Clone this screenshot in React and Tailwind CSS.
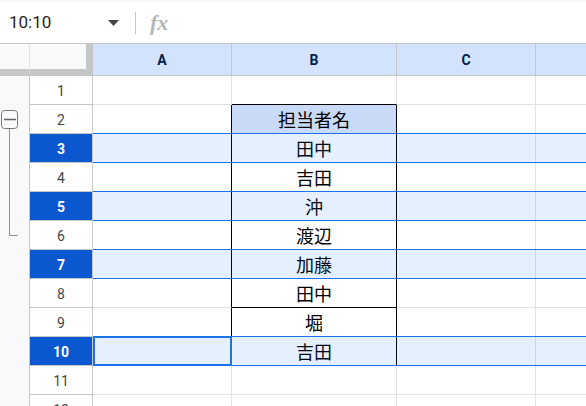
import React from 'react';

const rows = [
  { n: 1 },
  { n: 2, b: '担当者名', head: true },
  { n: 3, b: '田中', sel: true },
  { n: 4, b: '吉田' },
  { n: 5, b: '沖', sel: true },
  { n: 6, b: '渡辺' },
  { n: 7, b: '加藤', sel: true },
  { n: 8, b: '田中' },
  { n: 9, b: '堀' },
  { n: 10, b: '吉田', sel: true, active: true },
  { n: 11 },
  { n: 12 },
];

const FormulaBar = () => (
  <div className="flex h-[41px] items-center border-b border-[#c4c7c5] bg-white">
    <div className="flex w-[126px] items-center justify-between pl-[9px] pr-[7px]">
      <span className="text-[17px] text-[#1f1f1f]">10:10</span>
      <svg width="11" height="6" viewBox="0 0 11 6">
        <path d="M0 0h11L5.5 6z" fill="#444746" />
      </svg>
    </div>
    <div className="ml-[9px] h-[22px] w-px bg-[#c4c7c5]" />
    <span className="ml-[14px] font-['Liberation_Serif',serif] text-[22px] font-bold italic leading-none text-[#b4b7b9]">fx</span>
  </div>
);

const ColHeader = ({ label, w }) => (
  <div className={`flex h-[32px] shrink-0 items-center justify-center border-r border-b border-[#c4c7c5] bg-[#d3e3fd] pt-[1px] text-[14px] font-bold text-[#041e49] ${w}`}>
    {label}
  </div>
);

const Row = ({ n, b, head, sel, active }) => {
  const inB = n >= 2 && n <= 10;
  return (
    <div className="relative flex h-[29px]">
      <div
        className={`flex w-[63px] shrink-0 items-center justify-center border-r border-b border-[#c4c7c5] pt-[2px] text-[14px] ${
          sel ? 'bg-[#0b57d0] font-bold text-white' : 'bg-white text-[#444746]'
        }`}
      >
        {n}
      </div>
      <div className={`w-[139px] shrink-0 border-r border-b border-b-[#e1e1e1] ${inB ? 'border-r-black' : 'border-r-[#e1e1e1]'}`} />
      <div
        className={`flex w-[165px] shrink-0 items-center justify-center border-r border-b pt-[4px] font-['Liberation_Sans','Noto_Sans_CJK_JP',sans-serif] text-[18px] text-black ${
          inB || n === 1 ? 'border-b-black' : 'border-b-[#e1e1e1]'
        } ${inB ? 'border-r-black' : 'border-r-[#e1e1e1]'} ${head ? 'bg-[#c9daf8]' : 'bg-white'}`}
      >
        {b}
      </div>
      <div className="w-[139px] shrink-0 border-r border-b border-[#e1e1e1]" />
      <div className="flex-1 border-b border-[#e1e1e1]" />
      {sel && (
        <div className="pointer-events-none absolute top-[-1px] right-0 left-[63px] h-[30px] border-y border-[#1a73e8] bg-[rgba(14,101,235,0.1)]" />
      )}
      {active && (
        <div className="pointer-events-none absolute top-[-1px] left-[63px] h-[30px] w-[139px] border-2 border-[#1a73e8]" />
      )}
    </div>
  );
};

const GroupControl = () => (
  <svg width="30" height="170" viewBox="0 0 30 170" className="block">
    <rect x="1.5" y="34.5" width="16" height="18" rx="3" fill="#f8f9fa" stroke="#747775" />
    <path d="M4 43.5h12" stroke="#5f6368" strokeWidth="1.5" />
    <path d="M9.5 53v106.5H18" fill="none" stroke="#8e918f" />
  </svg>
);

export default function App() {
  return (
    <div className="h-screen overflow-hidden bg-white font-[Roboto,'Noto_Sans_CJK_JP',sans-serif]">
      <div className="h-[3px] bg-[#f8f9fa]" />
      <FormulaBar />
      <div className="flex">
        <div className="h-[32px] w-[30px] shrink-0 border-r border-r-[#e1e3e1] border-b-[7px] border-b-[#c4c7c5] bg-[#f8f9fa]" />
        <div className="h-[32px] w-[63px] shrink-0 border-r-[7px] border-b-[7px] border-[#c4c7c5] bg-[#f8f9fa]" />
        <ColHeader label="A" w="w-[139px]" />
        <ColHeader label="B" w="w-[165px]" />
        <ColHeader label="C" w="w-[139px]" />
        <div className="h-[32px] flex-1 border-b border-[#c4c7c5] bg-[#d3e3fd]" />
      </div>
      <div className="flex">
        <div className="w-[30px] shrink-0 border-r border-[#c4c7c5] bg-[#f8f9fa]">
          <GroupControl />
        </div>
        <div className="flex-1">
          {rows.map((r) => (
            <Row key={r.n} {...r} />
          ))}
        </div>
      </div>
    </div>
  );
}
